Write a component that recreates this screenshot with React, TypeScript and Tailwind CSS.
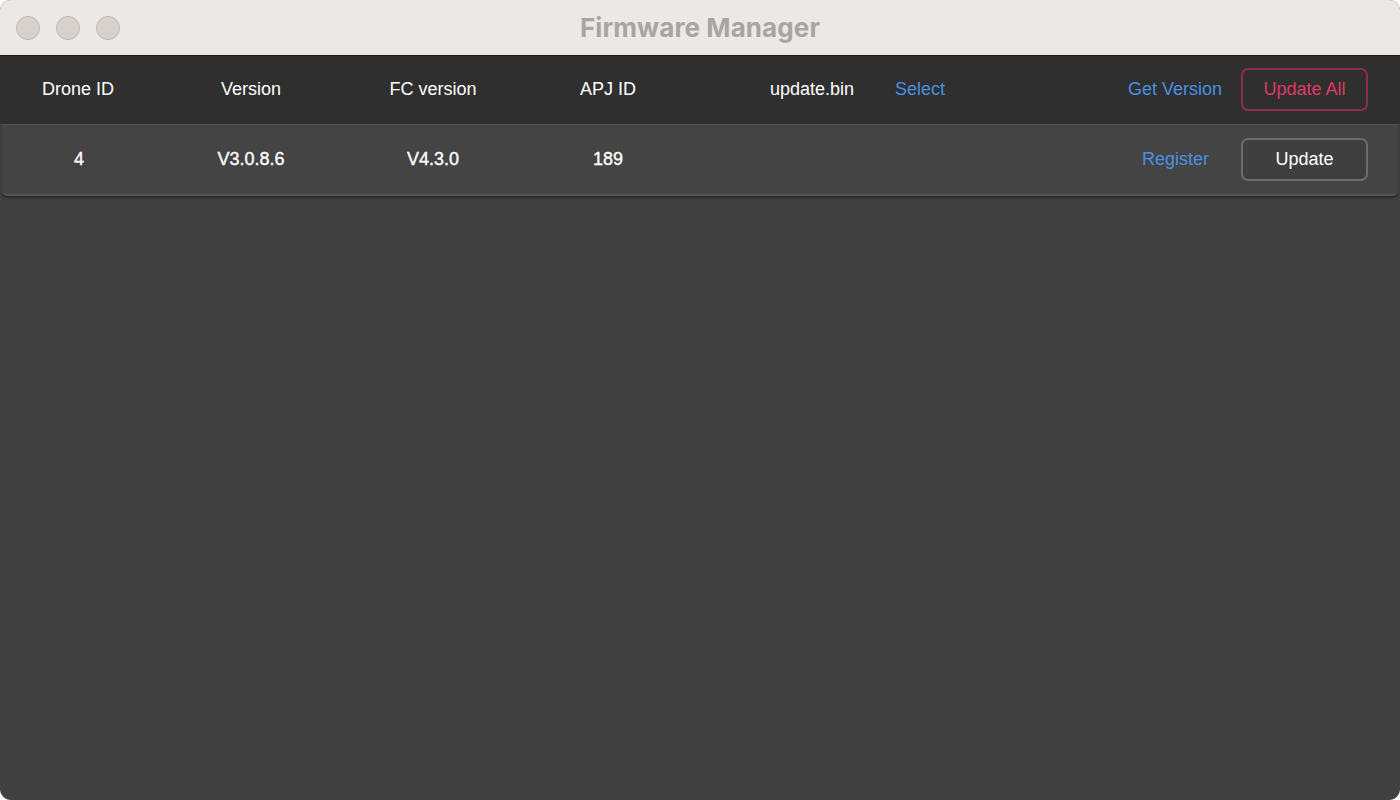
import React from "react";

const font = { fontFamily: '"Liberation Sans", Arial, Helvetica, sans-serif' };

export default function App() {
  return (
    <div className="w-[1400px] h-[800px] bg-white" style={font}>
      <div className="w-full h-full rounded-[11px] overflow-hidden flex flex-col bg-[#414141]">
        {/* Title bar */}
        <div className="relative h-[56px] shrink-0 bg-[#ece8e5] border-b border-[#1c1c1c] flex items-center justify-center">
          <div className="absolute left-[16px] top-[16px] flex gap-[16px]">
            <div className="w-[24px] h-[24px] rounded-full bg-[#d6d1cd] border border-[#bcb7b2]" />
            <div className="w-[24px] h-[24px] rounded-full bg-[#d6d1cd] border border-[#bcb7b2]" />
            <div className="w-[24px] h-[24px] rounded-full bg-[#d6d1cd] border border-[#bcb7b2]" />
          </div>
          <div
            className="text-[26px] font-bold text-[#a9a5a2] tracking-[0.1px]"
            style={{ fontFamily: 'Inter, "Liberation Sans", sans-serif' }}
          >
            Firmware Manager
          </div>
        </div>

        {/* Header */}
        <div className="h-[68px] shrink-0 bg-[#2f2f2f] flex items-center text-[18px] text-white pb-[2px]">
          <div className="w-[156px] text-center">Drone ID</div>
          <div className="w-[190px] text-center">Version</div>
          <div className="w-[174px] text-center">FC version</div>
          <div className="w-[176px] text-center">APJ ID</div>
          <div className="ml-[74px]">update.bin</div>
          <div className="text-[#4a90e2] ml-[41px]">Select</div>
          <div className="flex-1" />
          <div className="text-[#4a90e2] mr-[19px]">Get Version</div>
          <button className="w-[127px] h-[43px] rounded-[7px] border-2 border-[#8c2d49] text-[#de3a63] text-[18px] mr-[32px]">
            Update All
          </button>
        </div>

        {/* Row */}
        <div className="h-[72px] shrink-0 mx-[2px] bg-[#444444] border-t border-[#525252] border-b-2 border-b-[#545454] rounded-b-[5px] shadow-[0_2px_2px_rgba(0,0,0,0.35)] flex items-center text-[18px] text-white">
          <div className="w-[154px] text-center [-webkit-text-stroke:0.35px_white]">4</div>
          <div className="w-[190px] text-center [-webkit-text-stroke:0.35px_white]">V3.0.8.6</div>
          <div className="w-[174px] text-center [-webkit-text-stroke:0.35px_white]">V4.3.0</div>
          <div className="w-[176px] text-center [-webkit-text-stroke:0.35px_white]">189</div>
          <div className="flex-1" />
          <div className="text-[#4a90e2] mr-[32px]">Register</div>
          <button className="w-[127px] h-[43px] rounded-[7px] border-2 border-[#6c6c6c] bg-[#3f3f3f] text-white text-[18px] mr-[30px]">
            Update
          </button>
        </div>

        <div className="flex-1" />
      </div>
    </div>
  );
}
